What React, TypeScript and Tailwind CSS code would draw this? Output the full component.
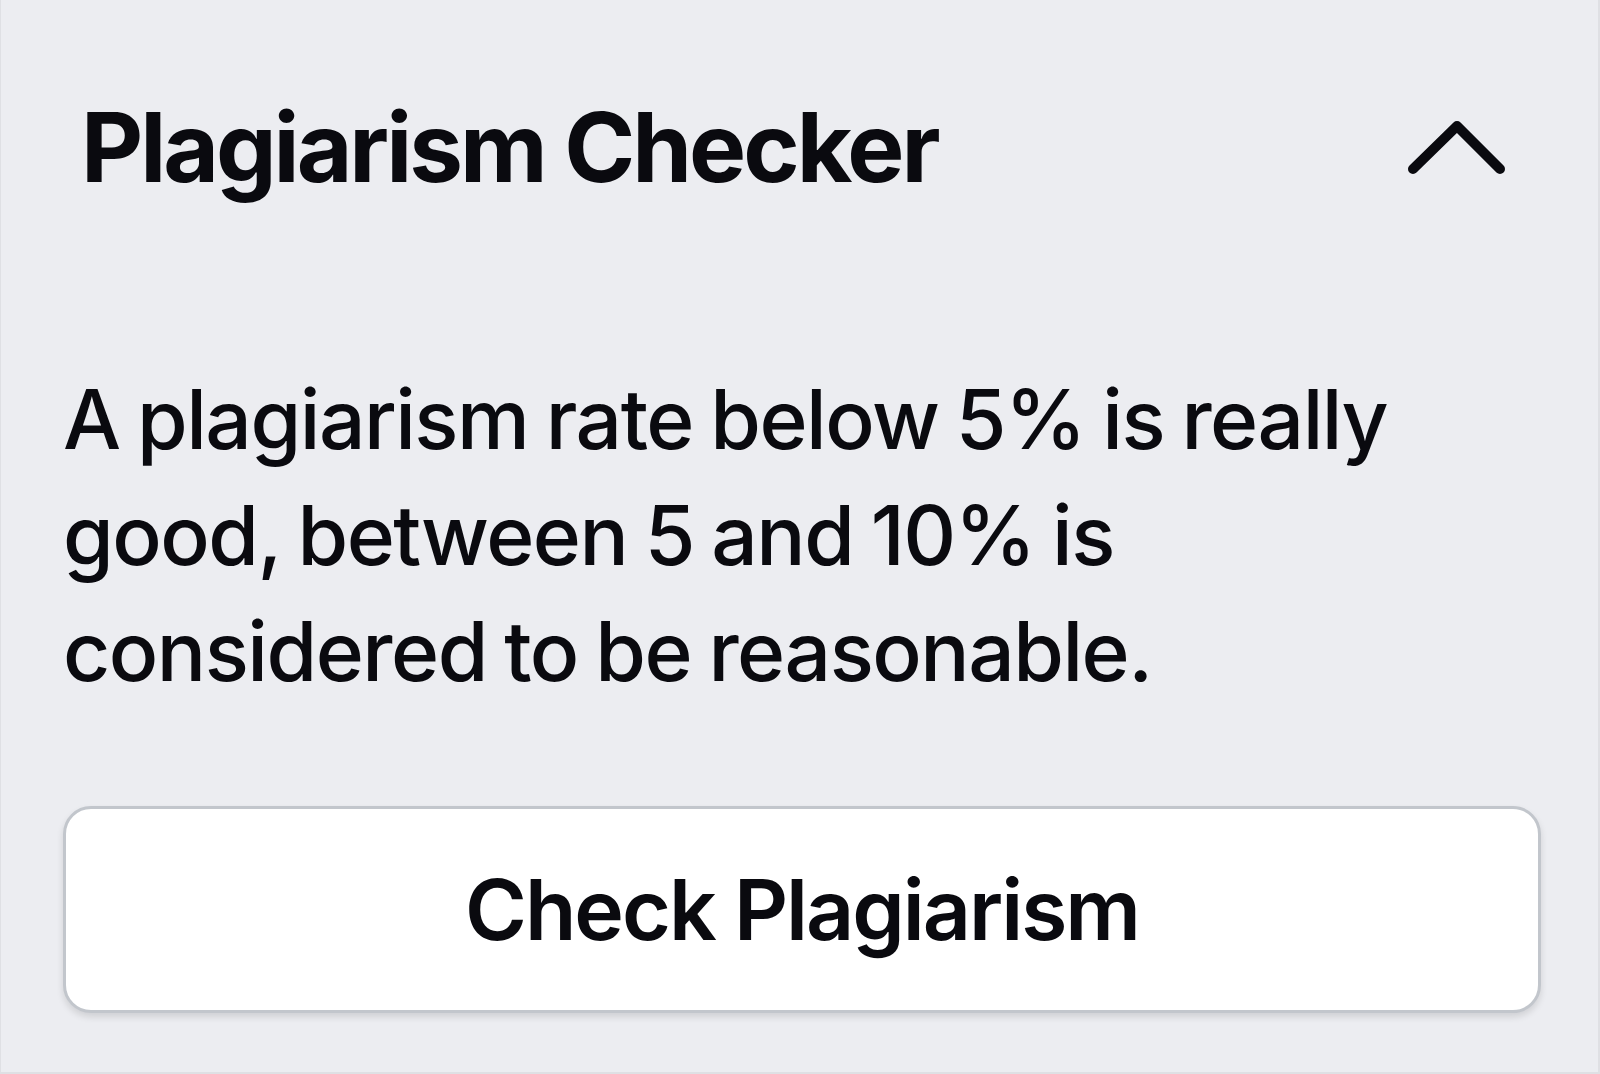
export default function App() {
  return (
    <div className="w-[1600px] h-[1074px] bg-[#ecedf1] border-r-2 border-b-2 border-l border-[#dfe0e4] text-[#0a0a0f] font-['Inter','Noto_Sans',sans-serif] overflow-hidden">
      <div className="flex flex-col pl-[62px] pr-[57px] pt-[99px]">
        <div className="flex items-start justify-between pl-[18px] pr-[32px]">
          <h2 className="text-[96px] leading-[96px] font-bold tracking-[-3px]">
            Plagiarism Checker
          </h2>
          <svg width="106" height="66" viewBox="0 0 106 66" fill="none" className="mt-[15px]">
            <polyline
              points="10,55 54,12 97,55"
              stroke="#0a0a0f"
              strokeWidth="10"
              strokeLinecap="round"
              strokeLinejoin="round"
            />
          </svg>
        </div>

        <p className="mt-[167px] w-[1380px] text-[82px] leading-[116px] font-medium tracking-[-1.5px] [word-spacing:-3px]">
          A plagiarism rate below 5% is really good, between 5 and 10% is
          considered to be reasonable.
        </p>

        <button className="mt-[96px] h-[207px] w-full rounded-[28px] border-[3px] border-[#c2c6cc] bg-white shadow-[0_4px_7px_rgba(0,0,0,0.12)] text-[84px] font-semibold tracking-[-2px]">
          Check Plagiarism
        </button>
      </div>
    </div>
  );
}
